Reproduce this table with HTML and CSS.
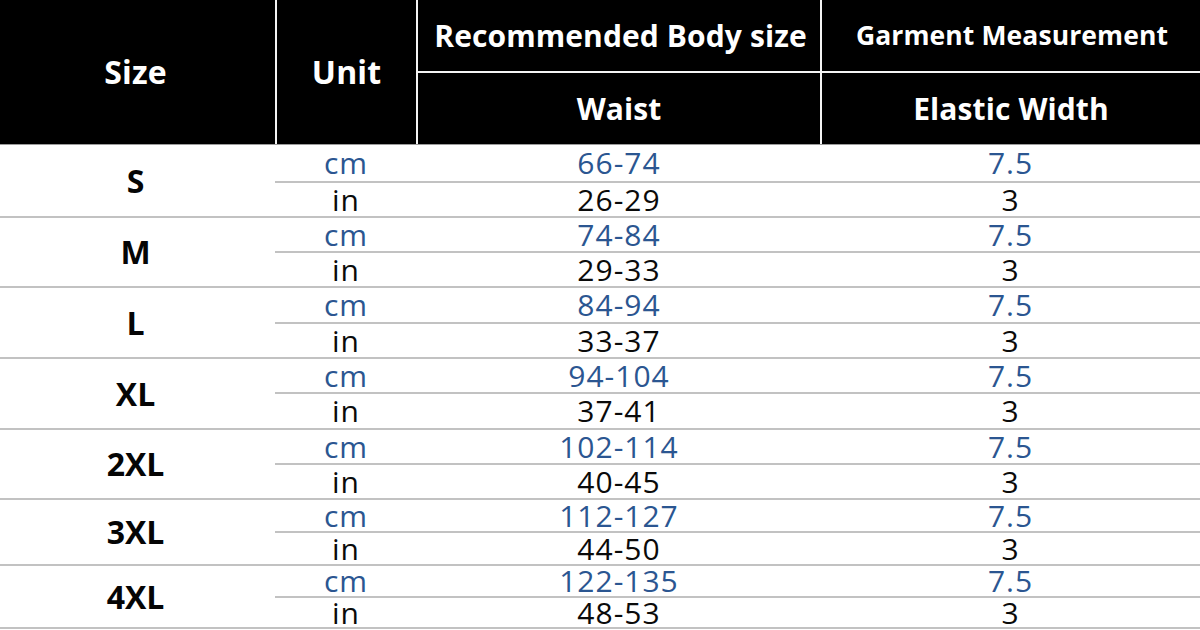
FILE: index.html
```html
<!DOCTYPE html>
<html lang="en">
<head>
<meta charset="utf-8">
<title>Size Chart</title>
<link rel="stylesheet" href="styles.css">
</head>
<body>
<div class="chart">
  <div class="head">
    <div class="hcell h-size">Size</div>
    <div class="hcell h-unit">Unit</div>
    <div class="hcell h-rec">Recommended Body size</div>
    <div class="hcell h-gar">Garment Measurement</div>
    <div class="hcell h-waist">Waist</div>
    <div class="hcell h-elastic">Elastic Width</div>
  </div>

  <div class="group g-s">
    <div class="size">S</div>
    <div class="cell cm">cm</div><div class="cell cm">66-74</div><div class="cell cm">7.5</div>
    <div class="cell">in</div><div class="cell">26-29</div><div class="cell">3</div>
  </div>
  <div class="group g-m">
    <div class="size">M</div>
    <div class="cell cm">cm</div><div class="cell cm">74-84</div><div class="cell cm">7.5</div>
    <div class="cell">in</div><div class="cell">29-33</div><div class="cell">3</div>
  </div>
  <div class="group g-l">
    <div class="size">L</div>
    <div class="cell cm">cm</div><div class="cell cm">84-94</div><div class="cell cm">7.5</div>
    <div class="cell">in</div><div class="cell">33-37</div><div class="cell">3</div>
  </div>
  <div class="group g-xl">
    <div class="size">XL</div>
    <div class="cell cm">cm</div><div class="cell cm">94-104</div><div class="cell cm">7.5</div>
    <div class="cell">in</div><div class="cell">37-41</div><div class="cell">3</div>
  </div>
  <div class="group g-2xl">
    <div class="size">2XL</div>
    <div class="cell cm">cm</div><div class="cell cm">102-114</div><div class="cell cm">7.5</div>
    <div class="cell">in</div><div class="cell">40-45</div><div class="cell">3</div>
  </div>
  <div class="group g-3xl">
    <div class="size">3XL</div>
    <div class="cell cm">cm</div><div class="cell cm">112-127</div><div class="cell cm">7.5</div>
    <div class="cell">in</div><div class="cell">44-50</div><div class="cell">3</div>
  </div>
  <div class="group g-4xl">
    <div class="size">4XL</div>
    <div class="cell cm">cm</div><div class="cell cm">122-135</div><div class="cell cm">7.5</div>
    <div class="cell">in</div><div class="cell">48-53</div><div class="cell">3</div>
  </div>
</div>
</body>
</html>
```

FILE: styles.css
```css
* { box-sizing: border-box; }
html, body {
  margin: 0;
  padding: 0;
  background: #ffffff;
}
body {
  width: 1200px;
  height: 630px;
  overflow: hidden;
  font-family: "Open Sans", "Noto Sans", sans-serif;
  color: #0a0a0a;
}
.chart {
  display: flex;
  flex-direction: column;
}
.head {
  display: grid;
  grid-template-columns: 275px 139px 402px 378px;
  grid-template-rows: 71px 71px;
  gap: 2px;
  background: #f4f4f4;
  height: 145px;
  border-bottom: 1px solid #9c9c9c;
}
.hcell {
  background: #000;
  color: #fff;
  font-weight: 700;
  display: flex;
  align-items: center;
  justify-content: center;
  line-height: 1;
  font-size: 30px;
  letter-spacing: 0.1px;
}
.h-size { grid-column: 1; grid-row: 1 / span 2; font-size: 32px; padding-right: 4px; }
.h-unit { grid-column: 2; grid-row: 1 / span 2; font-size: 32px; }
.h-rec { grid-column: 3; grid-row: 1; padding-left: 3px; }
.h-gar { grid-column: 4; grid-row: 1; font-size: 26.5px; padding-left: 2px; }
.h-waist { grid-column: 3; grid-row: 2; }
.h-elastic { grid-column: 4; grid-row: 2; }

.group {
  display: grid;
  grid-template-columns: 275px 142px 404px 379px;
}
.group .size {
  grid-column: 1;
  grid-row: 1 / span 2;
  display: flex;
  align-items: center;
  justify-content: center;
  font-weight: 700;
  font-size: 32px;
  line-height: 1;
  padding-right: 4px;
  border-bottom: 2px solid #c2c2c2;
  color: #050505;
}
.cell {
  display: flex;
  align-items: center;
  justify-content: center;
  font-size: 30px;
  line-height: 1;
  letter-spacing: 1px;
  border-bottom: 2px solid #c2c2c2;
  color: #0a0a0a;
}
.cell.cm { color: #2b5691; }

.g-s { grid-template-rows: 38px 35px; }
.g-m { grid-template-rows: 35px 35px; }
.g-l { grid-template-rows: 36px 35px; }
.g-xl { grid-template-rows: 35px 36px; }
.g-2xl { grid-template-rows: 35px 35px; }
.g-3xl { grid-template-rows: 33px 33px; }
.g-4xl { grid-template-rows: 32px 31px; }
```
